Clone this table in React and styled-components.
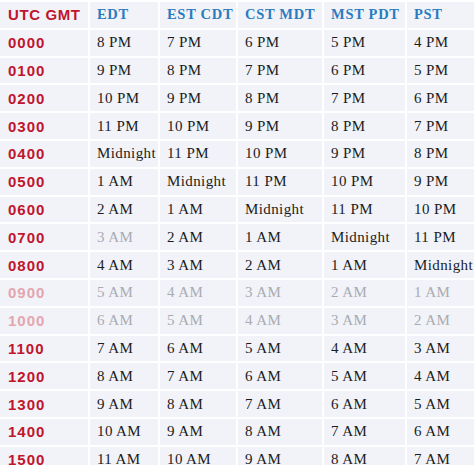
import React from "react";
import styled, { createGlobalStyle } from "styled-components";

const GlobalStyle = createGlobalStyle`
  html, body {
    margin: 0;
    padding: 0;
    background: #ffffff;
  }
`;

const Table = styled.div`
  display: grid;
  grid-template-columns: 88px 68px 76px 84px 81px 69px;
  grid-auto-rows: 25.8px;
  column-gap: 2px;
  row-gap: 2px;
  padding-top: 2px;
  width: 474px;
  height: 465px;
  overflow: hidden;
  background: #ffffff;
`;

const Cell = styled.div`
  display: flex;
  align-items: center;
  padding-left: ${(p) => (p.$first ? "8px" : "7px")};
  background: #f1f3f9;
  white-space: nowrap;
  overflow: hidden;
`;

const HeadCell = styled(Cell)`
  font-family: ${(p) =>
    p.$first ? '"Liberation Sans", Arial, sans-serif' : '"Liberation Serif", "Times New Roman", serif'};
  font-weight: bold;
  font-size: ${(p) => (p.$first ? "15px" : "14.5px")};
  letter-spacing: ${(p) => (p.$first ? "0.6px" : "0.7px")};
  color: ${(p) => (p.$first ? "#c0152c" : "#2b7cbf")};
`;

const UtcCell = styled(Cell)`
  font-family: "Liberation Sans", Arial, sans-serif;
  font-weight: bold;
  font-size: 15px;
  letter-spacing: 1px;
  color: ${(p) => (p.$faded ? "#e4a6ae" : "#c0152c")};
`;

const TimeCell = styled(Cell)`
  font-family: "Liberation Serif", "Times New Roman", serif;
  font-size: 15px;
  letter-spacing: 0.4px;
  color: ${(p) => (p.$faded ? "#a9abb0" : "#1c1c1c")};
`;

const headers = ["UTC GMT", "EDT", "EST CDT", "CST MDT", "MST PDT", "PST"];

const label = (h) => {
  const v = ((h % 24) + 24) % 24;
  if (v === 0) return "Midnight";
  if (v === 12) return "Noon";
  return `${v > 12 ? v - 12 : v} ${v >= 12 ? "PM" : "AM"}`;
};

const rows = Array.from({ length: 16 }, (_, i) => ({
  utc: String(i).padStart(2, "0") + "00",
  times: [4, 5, 6, 7, 8].map((off) => label(i - off)),
  faded: i === 9 || i === 10,
}));

// cells washed out by the watermark in the original picture
const fadedCells = { "7-0": true };

export default function App() {
  return (
    <>
      <GlobalStyle />
      <Table>
        {headers.map((h, i) => (
          <HeadCell key={h} $first={i === 0}>
            {h}
          </HeadCell>
        ))}
        {rows.map((r, ri) => (
          <React.Fragment key={r.utc}>
            <UtcCell $first $faded={r.faded}>
              {r.utc}
            </UtcCell>
            {r.times.map((t, ci) => (
              <TimeCell key={ci} $faded={r.faded || fadedCells[`${ri}-${ci}`]}>
                {t}
              </TimeCell>
            ))}
          </React.Fragment>
        ))}
      </Table>
    </>
  );
}
